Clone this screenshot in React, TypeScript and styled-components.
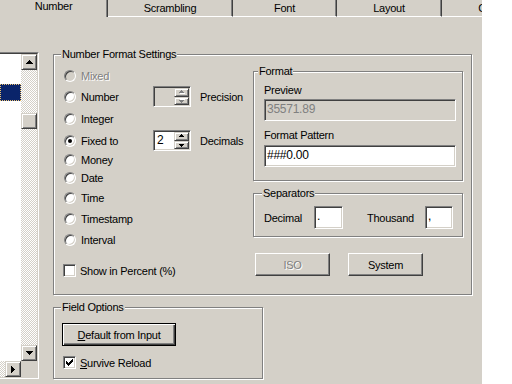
import styled, { createGlobalStyle } from "styled-components";

const GlobalStyle = createGlobalStyle`
  html, body {
    margin: 0;
    padding: 0;
    background: #fff;
  }
  body {
    font-family: "Liberation Sans", Arial, sans-serif;
    font-size: 11px;
    letter-spacing: -0.25px;
    color: #000;
  }
  * {
    box-sizing: border-box;
  }
`;

const Screen = styled.div`
  width: 512px;
  height: 384px;
  display: flex;
  overflow: hidden;
`;

const Window = styled.div`
  width: 482px;
  height: 384px;
  flex: none;
  background: #d4d0c8;
  display: flex;
  flex-direction: column;
  overflow: hidden;
`;

const Blank = styled.div`
  flex: 1;
  background: #fff;
`;

const TabStrip = styled.div`
  display: flex;
  height: 17px;
  flex: none;
`;

const Tab = styled.div<{ $w: number; $active?: boolean }>`
  flex: none;
  width: ${p => p.$w}px;
  height: 17px;
  overflow: hidden;
  text-align: center;
  white-space: nowrap;
  line-height: ${p => (p.$active ? 13 : 16)}px;
  border-right: 1px solid #404040;
  border-bottom: ${p => (p.$active ? "none" : "1px solid #fff")};
  box-shadow: inset -1px 0 #808080;
`;

const Body = styled.div`
  flex: 1;
  display: flex;
`;

const ListBox = styled.div`
  flex: none;
  width: 39px;
  height: 327px;
  margin-top: 35px;
  border-style: solid;
  border-width: 1px 1px 1px 0;
  border-color: #808080 #fff #fff #808080;
`;

const ListInner = styled.div`
  height: 100%;
  display: grid;
  grid-template-columns: 1fr 16px;
  grid-template-rows: 1fr 16px;
  border-style: solid;
  border-width: 1px 1px 1px 0;
  border-color: #404040 #d4d0c8 #d4d0c8 #404040;
`;

const ListArea = styled.div`
  background: #fff;
  padding-top: 30px;
`;

const ListItem = styled.div<{ $selected?: boolean }>`
  height: 17px;
  background: ${p => (p.$selected ? "#0a246a" : "#fff")};
  border: 1px dotted ${p => (p.$selected ? "#e8c070" : "transparent")};
`;

const VScroll = styled.div`
  display: flex;
  flex-direction: column;
`;

const HScroll = styled.div`
  display: flex;
`;

const Track = styled.div<{ $len?: number }>`
  flex: ${p => (p.$len ? `0 0 ${p.$len}px` : "1")};
  background-color: #fff;
  background-image: conic-gradient(#d4d0c8 25%, #fff 0 50%, #d4d0c8 0 75%, #fff 0);
  background-size: 2px 2px;
`;

const Corner = styled.div`
  background: #d4d0c8;
`;

const ScrollButton = styled.div`
  flex: none;
  width: 16px;
  height: 16px;
  background: #d4d0c8;
  border: 1px solid;
  border-color: #d4d0c8 #404040 #404040 #d4d0c8;
  box-shadow: inset 1px 1px #fff, inset -1px -1px #808080;
  display: flex;
  align-items: center;
  justify-content: center;
`;

const Content = styled.div`
  margin-left: 14px;
  padding-top: 31px;
  display: flex;
  flex-direction: column;
`;

const Group = styled.fieldset<{ $w: number; $mt?: number }>`
  margin: ${p => p.$mt ?? 0}px 0 0 0;
  padding: 0;
  min-width: 0;
  width: ${p => p.$w}px;
  border: 1px solid #808080;
  box-shadow: inset 1px 1px #fff, 1px 1px #fff;
`;

const Legend = styled.legend<{ $off: number }>`
  margin-left: ${p => p.$off}px;
  padding: 0 1px;
  height: 13px;
  line-height: 13px;
  background: #d4d0c8;
`;

const MainRow = styled.div`
  display: flex;
  padding: 0 8px 17px 9px;
`;

const LeftCol = styled.div`
  width: 190px;
  padding-top: 5px;
  display: flex;
  flex-direction: column;
`;

const RightCol = styled.div`
  width: 210px;
  padding-top: 4px;
  display: flex;
  flex-direction: column;
`;

const Row = styled.div<{ $h: number }>`
  height: ${p => p.$h}px;
  display: flex;
  align-items: center;
`;

const Option = styled.div<{ $disabled?: boolean }>`
  width: 90px;
  flex: none;
  display: flex;
  align-items: center;
  gap: 5px;
  color: ${p => (p.$disabled ? "#808080" : "#000")};
  text-shadow: ${p => (p.$disabled ? "1px 1px #fff" : "none")};
`;

const Radio = styled.span<{ $checked?: boolean; $disabled?: boolean }>`
  width: 12px;
  height: 12px;
  margin-left: 1px;
  flex: none;
  border-radius: 50%;
  border: 1px solid;
  border-color: #808080 #fff #fff #808080;
  background: ${p => (p.$disabled ? "#d4d0c8" : "#fff")};
  box-shadow: inset 1px 1px #404040, inset -1px -1px #d4d0c8;
  display: flex;
  align-items: center;
  justify-content: center;
  &::after {
    content: "";
    width: 4px;
    height: 4px;
    border-radius: 50%;
    background: #000;
    display: ${p => (p.$checked ? "block" : "none")};
  }
`;

const CheckRow = styled.div<{ $mt?: number }>`
  height: 13px;
  margin-top: ${p => p.$mt ?? 0}px;
  display: flex;
  align-items: center;
  gap: 4px;
`;

const CheckBox = styled.span`
  width: 13px;
  height: 13px;
  flex: none;
  background: #fff;
  border: 1px solid;
  border-color: #808080 #fff #fff #808080;
  box-shadow: inset 1px 1px #404040, inset -1px -1px #d4d0c8;
  display: flex;
  align-items: center;
  justify-content: center;
`;

const Spin = styled.div<{ $disabled?: boolean }>`
  width: 38px;
  height: 21px;
  flex: none;
  display: flex;
  background: ${p => (p.$disabled ? "#d4d0c8" : "#fff")};
  border: 1px solid;
  border-color: #808080 #fff #fff #808080;
  box-shadow: inset 1px 1px #404040, inset -1px -1px #d4d0c8;
  padding: 1px;
`;

const SpinValue = styled.div`
  flex: 1;
  padding-left: 2px;
  line-height: 17px;
  font-size: 12px;
`;

const SpinButtons = styled.div`
  width: 15px;
  display: flex;
  flex-direction: column;
`;

const SpinButton = styled.div`
  flex: 1;
  background: #d4d0c8;
  border: 1px solid;
  border-color: #d4d0c8 #404040 #404040 #d4d0c8;
  box-shadow: inset 1px 1px #fff, inset -1px -1px #808080;
  display: flex;
  align-items: center;
  justify-content: center;
`;

const SpinLabel = styled.span`
  margin-left: 9px;
`;

const FieldLabel = styled.div<{ $mt?: number }>`
  line-height: 13px;
  margin-top: ${p => p.$mt ?? 0}px;
`;

const TextField = styled.div<{ $disabled?: boolean; $w?: number; $h?: number; $mt?: number }>`
  width: ${p => (p.$w ? `${p.$w}px` : "auto")};
  height: ${p => p.$h ?? 22}px;
  margin-top: ${p => p.$mt ?? 0}px;
  flex: none;
  padding-left: 2px;
  line-height: ${p => (p.$h ?? 22) - 4}px;
  font-size: 12px;
  color: ${p => (p.$disabled ? "#808080" : "#000")};
  background: ${p => (p.$disabled ? "#d4d0c8" : "#fff")};
  border: 1px solid;
  border-color: #808080 #fff #fff #808080;
  box-shadow: inset 1px 1px #404040, inset -1px -1px #d4d0c8;
`;

const FormatBody = styled.div`
  padding: 6px 6px 13px 10px;
`;

const SepBody = styled.div`
  padding: 6px 6px 7px 10px;
  display: flex;
  align-items: center;
`;

const SepLabel = styled.span<{ $w: number; $ml?: number }>`
  width: ${p => p.$w}px;
  margin-left: ${p => p.$ml ?? 0}px;
  flex: none;
`;

const ButtonRow = styled.div`
  display: flex;
  gap: 18px;
  margin-top: 16px;
  padding-left: 2px;
`;

const Button = styled.div<{ $w: number; $disabled?: boolean; $focused?: boolean }>`
  width: ${p => p.$w}px;
  height: 23px;
  flex: none;
  display: flex;
  align-items: center;
  justify-content: center;
  background: #d4d0c8;
  color: ${p => (p.$disabled ? "#808080" : "#000")};
  text-shadow: ${p => (p.$disabled ? "1px 1px #fff" : "none")};
  border: 1px solid;
  border-color: ${p => (p.$focused ? "#000" : "#fff #404040 #404040 #fff")};
  box-shadow: ${p =>
    p.$focused
      ? "inset 1px 1px #fff, inset -1px -1px #404040, inset -2px -2px #808080"
      : "inset -1px -1px #808080"};
`;

const FieldBody = styled.div`
  padding: 9px 0 9px 9px;
  display: flex;
  flex-direction: column;
`;

const DefaultButton = styled(Button)`
  margin-left: -1px;
`;

const Arrow = ({ dir, color = "#000" }: { dir: "up" | "down" | "right"; color?: string }) => {
  if (dir === "right")
    return (
      <svg width="4" height="7" shapeRendering="crispEdges">
        <path d="M0 0h1v7h-1z M1 1h1v5h-1z M2 2h1v3h-1z M3 3h1v1h-1z" fill={color} />
      </svg>
    );
  const d = "M3 0h1v1h-1z M2 1h3v1h-3z M1 2h5v1h-5z M0 3h7v1h-7z";
  return (
    <svg width="7" height="4" shapeRendering="crispEdges" style={dir === "down" ? { transform: "scaleY(-1)" } : undefined}>
      <path d={d} fill={color} />
    </svg>
  );
};

const SmallArrow = ({ down, disabled }: { down?: boolean; disabled?: boolean }) => (
  <svg width="6" height="4" shapeRendering="crispEdges" style={down ? { transform: "scaleY(-1)" } : undefined}>
    {disabled && <path d="M3 1h1v1h-1z M2 2h3v1h-3z M1 3h5v1h-5z" fill="#fff" />}
    <path d="M2 0h1v1h-1z M1 1h3v1h-3z M0 2h5v1h-5z" fill={disabled ? "#808080" : "#000"} />
  </svg>
);

const Check = () => (
  <svg width="7" height="7" shapeRendering="crispEdges">
    <path d="M6 0h1v3h-1z M5 1h1v3h-1z M4 2h1v3h-1z M3 3h1v3h-1z M2 4h1v3h-1z M1 3h1v3h-1z M0 2h1v3h-1z" fill="#000" />
  </svg>
);

const tabs = [
  { name: "Number", w: 108, active: true },
  { name: "Scrambling", w: 125 },
  { name: "Font", w: 104 },
  { name: "Layout", w: 105 },
  { name: "Colors", w: 104 },
];

type Opt = {
  label: string;
  h: number;
  checked?: boolean;
  disabled?: boolean;
  spin?: { label: string; value: string; disabled?: boolean };
};

const options: Opt[] = [
  { label: "Mixed", h: 20, disabled: true },
  { label: "Number", h: 21, spin: { label: "Precision", value: "", disabled: true } },
  { label: "Integer", h: 23 },
  { label: "Fixed to", h: 21, checked: true, spin: { label: "Decimals", value: "2" } },
  { label: "Money", h: 17 },
  { label: "Date", h: 20 },
  { label: "Time", h: 20 },
  { label: "Timestamp", h: 21 },
  { label: "Interval", h: 21 },
];

const App = () => {
  return (
    <Screen>
      <GlobalStyle />
      <Window>
        <TabStrip>
          {tabs.map(t => (
            <Tab key={t.name} $w={t.w} $active={t.active}>
              {t.name}
            </Tab>
          ))}
        </TabStrip>
        <Body>
          <ListBox>
            <ListInner>
              <ListArea>
                <ListItem $selected />
              </ListArea>
              <VScroll>
                <ScrollButton>
                  <Arrow dir="up" />
                </ScrollButton>
                <Track $len={43} />
                <ScrollButton />
                <Track />
                <ScrollButton>
                  <Arrow dir="down" />
                </ScrollButton>
              </VScroll>
              <HScroll>
                <Track />
                <ScrollButton>
                  <Arrow dir="right" />
                </ScrollButton>
              </HScroll>
              <Corner />
            </ListInner>
          </ListBox>
          <Content>
            <Group $w={419}>
              <Legend $off={7}>Number Format Settings</Legend>
              <MainRow>
                <LeftCol>
                  {options.map(o => (
                    <Row key={o.label} $h={o.h}>
                      <Option $disabled={o.disabled}>
                        <Radio $checked={o.checked} $disabled={o.disabled} />
                        {o.label}
                      </Option>
                      {o.spin && (
                        <>
                          <Spin $disabled={o.spin.disabled}>
                            <SpinValue>{o.spin.value}</SpinValue>
                            <SpinButtons>
                              <SpinButton>
                                <SmallArrow disabled={o.spin.disabled} />
                              </SpinButton>
                              <SpinButton>
                                <SmallArrow down disabled={o.spin.disabled} />
                              </SpinButton>
                            </SpinButtons>
                          </Spin>
                          <SpinLabel>{o.spin.label}</SpinLabel>
                        </>
                      )}
                    </Row>
                  ))}
                  <CheckRow $mt={14}>
                    <CheckBox />
                    Show in Percent (%)
                  </CheckRow>
                </LeftCol>
                <RightCol>
                  <Group $w={210}>
                    <Legend $off={4}>Format</Legend>
                    <FormatBody>
                      <FieldLabel>Preview</FieldLabel>
                      <TextField $disabled $mt={2}>35571.89</TextField>
                      <FieldLabel $mt={8}>Format Pattern</FieldLabel>
                      <TextField $mt={3}>###0.00</TextField>
                    </FormatBody>
                  </Group>
                  <Group $w={210} $mt={6}>
                    <Legend $off={8}>Separators</Legend>
                    <SepBody>
                      <SepLabel $w={50}>Decimal</SepLabel>
                      <TextField $w={29} $h={23}>.</TextField>
                      <SepLabel $w={58} $ml={24}>Thousand</SepLabel>
                      <TextField $w={28} $h={23}>,</TextField>
                    </SepBody>
                  </Group>
                  <ButtonRow>
                    <Button $w={75} $disabled>ISO</Button>
                    <Button $w={75}>System</Button>
                  </ButtonRow>
                </RightCol>
              </MainRow>
            </Group>
            <Group $w={210} $mt={6}>
              <Legend $off={7}>Field Options</Legend>
              <FieldBody>
                <DefaultButton $w={114} $focused>
                  <span><u>D</u>efault from Input</span>
                </DefaultButton>
                <CheckRow $mt={10}>
                  <CheckBox>
                    <Check />
                  </CheckBox>
                  <span><u>S</u>urvive Reload</span>
                </CheckRow>
              </FieldBody>
            </Group>
          </Content>
        </Body>
      </Window>
      <Blank />
    </Screen>
  );
};

export default App;
